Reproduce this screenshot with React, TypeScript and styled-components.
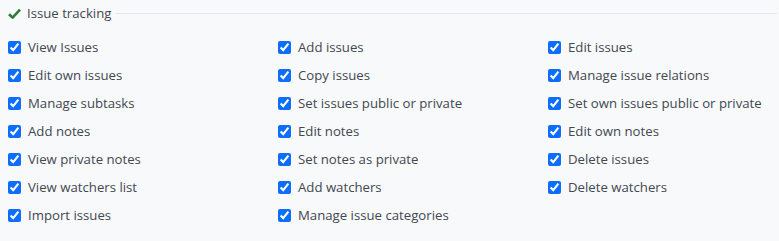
import React from "react"
import styled, { createGlobalStyle } from "styled-components"

const GlobalStyle = createGlobalStyle`
  html, body {
    margin: 0;
    padding: 0;
    background: #f8f9fa;
  }
  body {
    font-family: "Open Sans", "Noto Sans", sans-serif;
    font-size: 13.2px;
    color: #424850;
  }
`

const Page = styled.div`
  height: 241px;
  padding: 4px 2px 0 8px;
  box-sizing: border-box;
  overflow: hidden;
`

const Fieldset = styled.fieldset`
  margin: 0;
  padding: 0;
  border: none;
  border-top: 1px solid #e3e6ea;
  min-width: 0;
`

const Legend = styled.legend`
  display: flex;
  align-items: center;
  gap: 6px;
  padding: 0 5px 0 0;
  font-size: 13.2px;
  color: #424850;
`

const Grid = styled.div`
  display: grid;
  grid-template-columns: 270px 270px 1fr;
  grid-auto-rows: 28px;
  padding-top: 11px;
`

const Item = styled.label`
  display: flex;
  align-items: center;
  gap: 7px;
  white-space: nowrap;
`

const Box = styled.input`
  width: 13px;
  height: 13px;
  margin: 0;
  accent-color: #0d6efd;
`

const CheckIcon = () => (
  <svg width="13" height="11" viewBox="0 0 13 11">
    <path
      d="M1 6.2 L4.6 9.6 L12 1.6"
      fill="none"
      stroke="#2e7d32"
      strokeWidth="2.6"
      strokeLinejoin="round"
    />
  </svg>
)

const permissions = [
  "View Issues",
  "Add issues",
  "Edit issues",
  "Edit own issues",
  "Copy issues",
  "Manage issue relations",
  "Manage subtasks",
  "Set issues public or private",
  "Set own issues public or private",
  "Add notes",
  "Edit notes",
  "Edit own notes",
  "View private notes",
  "Set notes as private",
  "Delete issues",
  "View watchers list",
  "Add watchers",
  "Delete watchers",
  "Import issues",
  "Manage issue categories",
]

export default function App() {
  return (
    <>
      <GlobalStyle />
      <Page>
        <Fieldset>
          <Legend>
            <CheckIcon />
            Issue tracking
          </Legend>
          <Grid>
            {permissions.map((p) => (
              <Item key={p}>
                <Box type="checkbox" defaultChecked />
                {p}
              </Item>
            ))}
          </Grid>
        </Fieldset>
      </Page>
    </>
  )
}
